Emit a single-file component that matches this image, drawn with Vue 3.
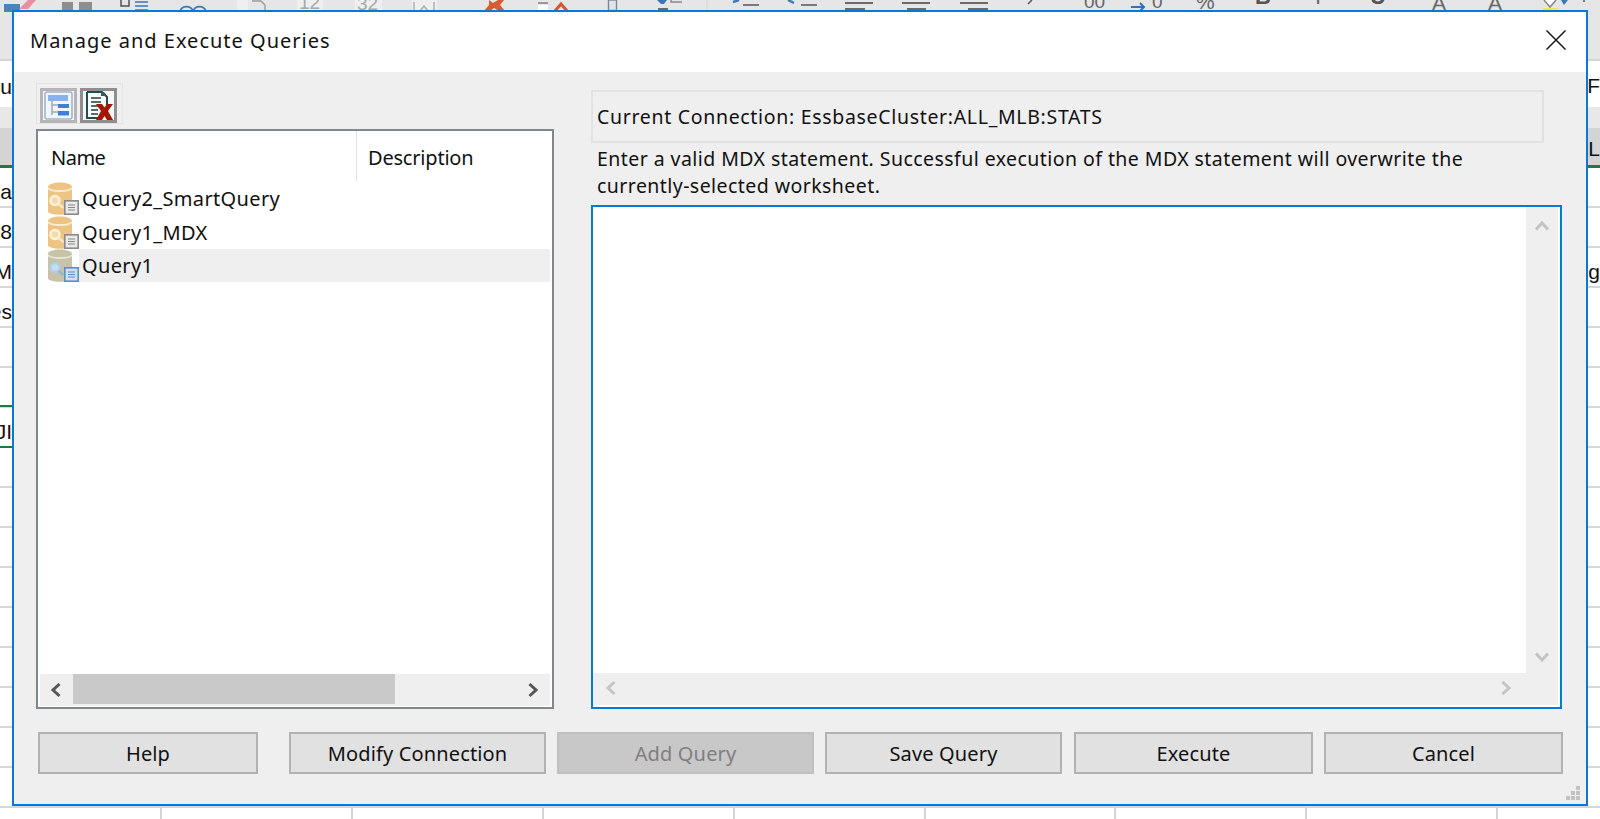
<script setup>
const queries = [
  { name: 'Query2_SmartQuery', selected: false },
  { name: 'Query1_MDX', selected: false },
  { name: 'Query1', selected: true }
]
const buttons = [
  { label: 'Help', width: 220, gap: 0 },
  { label: 'Modify Connection', width: 257, gap: 31 },
  { label: 'Add Query', width: 257, gap: 11, disabled: true },
  { label: 'Save Query', width: 237, gap: 11 },
  { label: 'Execute', width: 239, gap: 12 },
  { label: 'Cancel', width: 239, gap: 11 }
]
const gridLines = [160, 351, 542, 733, 924, 1114, 1305, 1496]
const leftCells = [
  { t: 'u', y: 74 }, { t: 'ea', y: 179 }, { t: '8', y: 219 }, { t: 'M', y: 259 }, { t: 'es', y: 299 }, { t: 'JI', y: 419 }
]
const rightCells = [
  { t: 'F', y: 73 }, { t: 'L', y: 136 }, { t: 'ng', y: 259 }
]
const ribbonText = [
  { t: '12', x: 299, y: -9, s: 19, faint: true },
  { t: '32', x: 357, y: -8, s: 19, faint: true },
  { t: '00', x: 1084, y: -10, s: 19 },
  { t: '0', x: 1152, y: -10, s: 19 },
  { t: '%', x: 1196, y: -10, s: 21 },
  { t: 'B', x: 1255, y: -15, s: 22, b: true },
  { t: 'I', x: 1315, y: -15, s: 22 },
  { t: 'U', x: 1370, y: -15, s: 22, b: true },
  { t: 'A', x: 1432, y: -9, s: 21 },
  { t: 'A', x: 1488, y: -9, s: 21 }
]
</script>

<template>
  <div class="page">
    <div class="sheet">
      <i v-for="x in gridLines" :key="x" class="vline" :style="{ left: x + 'px' }"></i>
      <div class="head-band"></div>
      <div class="left-active"></div>
      <div class="left-active2"></div>
      <span v-for="c in leftCells" :key="c.t" class="cell-l" :style="{ top: c.y + 'px' }">{{ c.t }}</span>
      <span v-for="c in rightCells" :key="c.t" class="cell-r" :style="{ top: c.y + 'px' }">{{ c.t }}</span>
      <svg class="ribbon" width="1600" height="12" viewBox="0 0 1600 12">
        <path d="M4 4h16v8H4z" fill="#4d82b8"/><path d="M19 9l9-9h8l-8 9z" fill="#e98fa0"/>
        <path d="M62 2h11v10H62zM79 2h13v10H79z" fill="#8d8d8d"/>
        <path d="M121 0v6h8V0" fill="none" stroke="#50505a" stroke-width="1.5"/>
        <path d="M135 2h13M135 6h13M135 10h13" fill="none" stroke="#3b78b5" stroke-width="1.5"/>
        <path d="M180 11a7 7 0 0 1 13 0M193 11a7 7 0 0 1 13 0" fill="none" stroke="#3b78b5" stroke-width="1.6"/>
        <path d="M237 0h11v12h-11zM297 0h26v12h-26zM355 0h27v12h-27zM412 0h25v12h-25z" fill="#efefef"/>
        <path d="M252 1h9l4 4v7" fill="none" stroke="#9a9a9a" stroke-width="1.4"/>
        <path d="M420 11l4-5 4 5M414 2v10M434 2v10" fill="none" stroke="#aaa" stroke-width="1.4"/>
        <path d="M489 0l4 3 5-3 6 0-4 5 5 6h-6l-5-3-4 3h-6l5-6z" fill="#dc5a30"/>
        <path d="M554 12l7-8 7 8" fill="none" stroke="#d9552c" stroke-width="3"/>
        <path d="M538 2h10v2h-10z" fill="#9a9a9a"/><path d="M538 5h10v7h-10z" fill="#fff"/>
        <rect x="608.5" y="0" width="8" height="10.5" fill="#dfe3ea" stroke="#7d8794" stroke-width="1.4"/>
        <path d="M657 0h10l-3 4h-3z" fill="#3b78b5"/><path d="M671 0v2h11" fill="none" stroke="#8a8a8a" stroke-width="1.5"/>
        <path d="M658 9h10" stroke="#6a6a6a" stroke-width="2"/>
        <path d="M707 0v12" stroke="#d4d4d4"/>
        <path d="M733 2l6-2" stroke="#3b78b5" stroke-width="2.4"/><path d="M743 5h16" stroke="#6e6e6e" stroke-width="1.8"/>
        <path d="M788 0l6 3" stroke="#3b78b5" stroke-width="2.4"/><path d="M801 5h16" stroke="#6e6e6e" stroke-width="1.8"/>
        <path d="M845 3h28M845 9h20M902 3h28M907 9h19M960 3h28M968 9h20" stroke="#6a6a6a" stroke-width="1.8"/>
        <path d="M1032 0l-4 4" stroke="#555" stroke-width="1.5"/>
        <path d="M1131 7h13M1140 3l4 4-4 4" stroke="#2f73b8" fill="none" stroke-width="2"/>
        <path d="M1544 0l6 7 6-7" fill="#fff" stroke="#888" stroke-width="1.5"/>
        <path d="M1543 9.5h15" stroke="#f5ec00" stroke-width="2.4"/>
        <path d="M1561 0h7l-4 5z" fill="#3b78b5"/>
        <circle cx="1584" cy="1" r="1" fill="#555"/>
      </svg>
      <span v-for="r in ribbonText" :key="r.x" class="rtext" :class="{ b: r.b, faint: r.faint }" :style="{ left: r.x + 'px', top: r.y + 'px', fontSize: r.s + 'px' }">{{ r.t }}</span>
    </div>

    <section class="dialog">
      <header class="titlebar">
        <h1 class="title">Manage and Execute Queries</h1>
        <svg class="close" width="20" height="20" viewBox="0 0 20 20"><path d="M0.5 0.5l19 19M19.5 0.5l-19 19" stroke="#1a1a1a" stroke-width="1.5"/></svg>
      </header>

      <div class="body">
        <div class="main">
          <div class="left">
            <div class="toolbar">
              <button class="tool">
                <svg width="31" height="31" viewBox="0 0 31 31">
                  <rect x="2" y="2" width="27" height="27" rx="2" fill="#f1f5fc" stroke="#a3b4cc" stroke-width="1.6"/>
                  <rect x="5" y="5" width="20" height="6" fill="#8ab0ee"/>
                  <path d="M9 11v14M9 15h6M9 22h6" stroke="#9ba9bf" stroke-width="1.5" fill="none"/>
                  <rect x="15" y="14" width="11" height="4" fill="#3f7fdc"/>
                  <rect x="15" y="21" width="11" height="4.5" fill="#3f7fdc"/>
                </svg>
              </button>
              <button class="tool tool-on">
                <svg width="31" height="31" viewBox="0 0 31 31">
                  <path d="M4 2h15l5 5v9M4 2v26h13" fill="#fff" stroke="#1f4f4f" stroke-width="2"/>
                  <path d="M8 8h10M8 12h10M8 16h8M8 20h7M8 24h7" stroke="#1f3f3f" stroke-width="1.5"/>
                  <path d="M18 2h3l3 4h-6z" fill="#2e5f60"/>
                  <path d="M13 14h6l2.500 3.500 2.500-3.500h6l-5 7 5 9h-6l-2.500-4-2.500 4h-6l5-9z" fill="#a31608"/>
                </svg>
              </button>
            </div>
            <div class="list">
              <div class="list-head">
                <span class="col-name">Name</span>
                <span class="col-desc">Description</span>
              </div>
              <ul class="rows">
                <li v-for="q in queries" :key="q.name" class="row">
                  <svg class="qicon" width="32" height="33" viewBox="0 0 32 33">
                    <path d="M1 5c0-6 24-6 24 0v24c0 5-24 5-24 0z" :fill="q.selected ? '#c8c2a6' : '#edc483'"/>
                    <path d="M1 6c3 4 21 4 24 0" fill="none" :stroke="q.selected ? '#e9e6d8' : '#fbeed6'" stroke-width="1.8"/>
                    <circle cx="8" cy="18.500" r="4.500" :fill="q.selected ? '#cddbe6' : '#f6d9a8'" :stroke="q.selected ? '#a8d0f0' : '#fff3dd'" stroke-width="2.400"/>
                    <path d="M11.500 22l5 4" :stroke="q.selected ? '#94b4d2' : '#fbe6c4'" stroke-width="2.400"/>
                    <rect x="17.800" y="18.800" width="13.400" height="13.400" :fill="q.selected ? '#cfe0f4' : '#e9e9e9'" :stroke="q.selected ? '#5b8fc4' : '#8a8a8a'" stroke-width="1.600"/>
                    <path d="M21 23h7M21 25.500h7M21 28h7" :stroke="q.selected ? '#5b8fc4' : '#8a8a8a'" stroke-width="1.100"/>
                  </svg>
                  <span class="qname" :class="{ sel: q.selected }">{{ q.name }}</span>
                </li>
              </ul>
              <div class="hscroll">
                <svg class="chev" width="14" height="16" viewBox="0 0 14 16"><path d="M10.500 2L4 8l6.500 6" fill="none" stroke="#555" stroke-width="3"/></svg>
                <div class="track"><div class="thumb"></div></div>
                <svg class="chev" width="14" height="16" viewBox="0 0 14 16"><path d="M3.500 2L10 8l-6.500 6" fill="none" stroke="#555" stroke-width="3"/></svg>
              </div>
            </div>
          </div>

          <div class="right">
            <div class="conn">Current Connection: EssbaseCluster:ALL_MLB:STATS</div>
            <p class="msg">Enter a valid MDX statement. Successful execution of the MDX statement will overwrite the<br>currently-selected worksheet.</p>
            <div class="editor">
              <div class="ed-top">
                <div class="ed-white"></div>
                <div class="vscroll">
                  <svg width="16" height="14" viewBox="0 0 16 14"><path d="M2 10.500L8 4l6 6.500" fill="none" stroke="#c4c4c4" stroke-width="3"/></svg>
                  <svg width="16" height="14" viewBox="0 0 16 14"><path d="M2 3.500L8 10l6-6.500" fill="none" stroke="#c4c4c4" stroke-width="3"/></svg>
                </div>
              </div>
              <div class="ed-h">
                <svg width="14" height="16" viewBox="0 0 14 16"><path d="M10.500 2L4 8l6.500 6" fill="none" stroke="#c4c4c4" stroke-width="3"/></svg>
                <svg width="14" height="16" viewBox="0 0 14 16"><path d="M3.500 2L10 8l-6.500 6" fill="none" stroke="#c4c4c4" stroke-width="3"/></svg>
              </div>
            </div>
          </div>
        </div>

        <footer class="actions">
          <button v-for="b in buttons" :key="b.label" class="btn" :class="{ off: b.disabled }" :style="{ width: b.width + 'px', marginLeft: b.gap + 'px' }">{{ b.label }}</button>
        </footer>
      </div>
      <svg class="grip" width="16" height="16" viewBox="0 0 16 16" fill="#c2c2c2">
        <rect x="11" y="1" width="4" height="4"/><rect x="6" y="6" width="4" height="4"/><rect x="11" y="6" width="4" height="4"/>
        <rect x="1" y="11" width="4" height="4"/><rect x="6" y="11" width="4" height="4"/><rect x="11" y="11" width="4" height="4"/>
      </svg>
    </section>
  </div>
</template>

<style>
html, body { margin: 0; background: #fff; }
</style>

<style scoped>
.page { position: relative; width: 1600px; height: 819px; overflow: hidden; font-family: "Noto Sans", "Open Sans", sans-serif; color: #111; }
.sheet {
  position: absolute; inset: 0;
  background:
    linear-gradient(#e6e6e6, #e6e6e6) 0 0 / 100% 59px no-repeat,
    repeating-linear-gradient(to bottom, #d6d6d6 0 2px, #fff 2px 40px) 0 166px;
}
.head-band { position: absolute; left: 0; right: 0; top: 107px; height: 61px; background: linear-gradient(#e8e8e8 0 21px, #d4d4d4 21px 58px, #1d7a45 58px 61px); }
.sheet::before { content: ""; position: absolute; left: 0; right: 0; top: 59px; height: 48px; background: #fff; border-top: 2px solid #d6d6d6; box-sizing: border-box; }
.left-active { position: absolute; left: 0; width: 14px; top: 405px; height: 2px; background: #1d7a45; }
.left-active2 { position: absolute; left: 0; width: 14px; top: 446px; height: 2px; background: #1d7a45; }
.vline { position: absolute; top: 806px; bottom: 0; width: 2px; background: #d4d4d4; }
.cell-l, .cell-r { position: absolute; font-size: 21px; line-height: 26px; font-family: "Liberation Sans", sans-serif; }
.cell-l { right: 1588px; }
.cell-r { right: 0; width: 11px; direction: rtl; white-space: nowrap; }
.ribbon { position: absolute; left: 0; top: 0; }
.rtext { position: absolute; line-height: 24px; font-family: "Liberation Sans", sans-serif; color: #666; }
.rtext.b { font-weight: 700; color: #555; }
.rtext.faint { color: #a8a8a8; }

.dialog { position: absolute; left: 12px; top: 10px; width: 1576px; height: 796px; box-sizing: border-box; border: 2px solid #0a78d7; background: #efefef; display: flex; flex-direction: column; }
.titlebar { height: 60px; box-sizing: border-box; flex: none; background: #fff; display: flex; align-items: center; justify-content: space-between; padding: 0 20px 4px 16px; }
.title { margin: 0; font-weight: 400; font-size: 20px; letter-spacing: 1px; color: #111; }
.body { padding: 11px 24px 0 22px; display: flex; flex-direction: column; }
.main { display: flex; gap: 37px; height: 626px; }
.left { width: 518px; display: flex; flex-direction: column; }
.toolbar { width: 87px; height: 41px; box-sizing: border-box; border: 1px solid #e2e2e2; display: flex; gap: 3px; padding: 4px 0 0 3px; margin-bottom: 5px; }
.tool { width: 37px; height: 35px; padding: 0; border: 3px solid #b5b5b5; background: #f6f6f6; display: flex; align-items: center; justify-content: center; }
.tool-on { border-color: #8f8f8f; }
.list { flex: 1; box-sizing: border-box; border: 2px solid #7f8790; background: #fff; display: flex; flex-direction: column; padding: 0 2px 1px; }
.list-head { height: 51px; flex: none; position: relative; font-size: 20px; line-height: 50px; }
.col-name { position: absolute; left: 11px; top: 2px; letter-spacing: -0.5px; }
.col-desc { position: absolute; left: 328px; top: 2px; letter-spacing: -0.2px; }
.list-head::after { content: ""; position: absolute; left: 316px; top: 0; height: 50px; width: 1px; background: #e2e2e2; }
.rows { list-style: none; margin: 0; padding: 0; flex: 1; }
.row { height: 33.600px; display: flex; align-items: center; position: relative; padding-left: 7px; }
.qicon { flex: none; position: relative; z-index: 1; }
.qname { flex: 1; height: 33px; line-height: 34px; font-size: 20px; letter-spacing: 0.35px; padding-left: 3px; }
.qname.sel { background: #efefef; }
.hscroll { height: 32px; flex: none; background: #efefef; display: flex; align-items: center; }
.chev { flex: none; margin: 0 10px 0 9px; }
.track { flex: 1; height: 30px; align-self: flex-start; }
.thumb { width: 322px; height: 30px; background: #c9c9c9; }

.right { width: 971px; display: flex; flex-direction: column; }
.conn { height: 53px; box-sizing: border-box; margin-top: 7px; margin-right: 18px; border: 2px solid #e2e2e2; padding: 0 4px; line-height: 49px; font-size: 19.500px; letter-spacing: 0.68px; }
.msg { margin: 3px 0 0; height: 59px; padding-left: 6px; font-size: 19.500px; line-height: 26.500px; letter-spacing: 0.44px; }
.editor { flex: 1; box-sizing: border-box; border: 2px solid #0a78d7; background: #fff; display: flex; flex-direction: column; padding: 0 2px 2px 0; min-height: 0; }
.ed-top { flex: 1; display: flex; min-height: 0; }
.ed-white { flex: 1; background: #fff; }
.vscroll { width: 32px; background: #efefef; display: flex; flex-direction: column; justify-content: space-between; align-items: center; padding: 12px 0 9px; box-sizing: border-box; }
.ed-h { height: 32px; flex: none; background: #efefef; display: flex; align-items: center; justify-content: space-between; padding: 0 45px 2px 11px; box-sizing: border-box; }

.actions { display: flex; margin-top: 23px; padding-left: 2px; }
.btn { height: 42px; padding: 0; box-sizing: border-box; border: 2px solid #b2b2b2; background: #e1e1e1; font: inherit; font-size: 20px; letter-spacing: 0.15px; color: #111; flex: none; }
.btn.off { background: #c8c8c8; border-color: #c0c0c0; color: #7f7f7f; }
.grip { position: absolute; right: 5px; bottom: 3px; }
</style>
